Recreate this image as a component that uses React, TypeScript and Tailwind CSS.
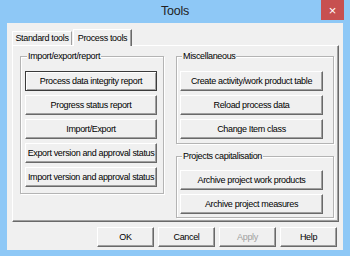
import React from "react";

const FONT = { fontFamily: '"Liberation Sans", Arial, sans-serif' };

function Btn({
  label,
  w,
  isDefault,
  disabled,
}: {
  label: string;
  w: string;
  isDefault?: boolean;
  disabled?: boolean;
}) {
  const edge = isDefault
    ? "border border-[#3a3a3a] shadow-[inset_1px_1px_0_#fff,inset_-1px_-1px_0_#a0a0a0]"
    : "border border-t-white border-l-white border-r-[#696969] border-b-[#696969] shadow-[inset_-1px_-1px_0_#a0a0a0]";
  return (
    <button
      type="button"
      className={`${w} h-[20px] shrink-0 bg-[#f0f0f0] flex items-center justify-center text-[9px] leading-none tracking-[-0.35px] ${edge} ${
        disabled ? "text-[#a0a0a0]" : "text-black"
      }`}
    >
      {label}
    </button>
  );
}

function Group({
  title,
  className,
  children,
}: {
  title: string;
  className: string;
  children: React.ReactNode;
}) {
  return (
    <fieldset
      className={`border border-[#b4b4b4] shadow-[inset_1px_1px_0_#fff,1px_1px_0_#fff] flex flex-col ${className}`}
    >
      <legend className="ml-[2px] px-[1px] bg-[#f0f0f0] text-[9px] leading-[11px] tracking-[-0.35px] text-black">
        {title}
      </legend>
      {children}
    </fieldset>
  );
}

export default function App() {
  return (
    <div className="w-[350px] h-[256px] bg-[#8ec8f6] flex flex-col overflow-hidden" style={FONT}>
      <div className="h-[23px] flex items-start shrink-0">
        <div className="w-[29px]" />
        <div className="flex-1 text-center text-[12.5px] leading-[23px] tracking-[-0.2px] text-[#222]">
          Tools
        </div>
        <div className="w-[23px] h-[20px] mr-[6px] bg-[#c75050] flex items-center justify-center text-white text-[13px] leading-none">
          ×
        </div>
      </div>

      <div className="mx-[7px] h-[227px] bg-[#f0f0f0] flex flex-col pt-[6px] pl-[5px]">
        {/* tabs */}
        <div className="flex items-end h-[16px] relative z-10">
          <div className="w-[60px] h-[14px] border border-b-0 border-t-white border-l-white border-r-[#a0a0a0] flex items-center justify-center text-[9px] tracking-[-0.35px] text-black">
            Standard tools
          </div>
          <div className="w-[59px] h-[17px] -mb-px ml-[1px] bg-[#f0f0f0] border border-b-0 border-t-white border-l-white border-r-[#696969] shadow-[inset_-1px_0_0_#a0a0a0] flex items-start pt-[2px] justify-center text-[9px] tracking-[-0.35px] text-black">
            Process tools
          </div>
        </div>

        {/* panel */}
        <div className="w-[327px] h-[177px] border border-t-white border-l-white border-r-[#696969] border-b-[#696969] shadow-[inset_-1px_-1px_0_#a0a0a0] flex items-start pl-[7px] pt-[5px]">
          <Group title="Import/export/report" className="w-[144px] h-[143px] pl-[4px] pt-[9px] gap-[4px]">
            <Btn label="Process data integrity report" w="w-[132px]" isDefault />
            <Btn label="Progress status report" w="w-[132px]" />
            <Btn label="Import/Export" w="w-[132px]" />
            <Btn label="Export version and approval status" w="w-[132px]" />
            <Btn label="Import version and approval status" w="w-[132px]" />
          </Group>

          <div className="ml-[12px] flex flex-col gap-[7px]">
            <Group title="Miscellaneous" className="w-[158px] h-[93px] pl-[3px] pt-[9px] gap-[4px]">
              <Btn label="Create activity/work product table" w="w-[143px]" />
              <Btn label="Reload process data" w="w-[143px]" />
              <Btn label="Change Item class" w="w-[143px]" />
            </Group>
            <Group title="Projects capitalisation" className="w-[158px] h-[67px] pl-[3px] pt-[8px] gap-[4px]">
              <Btn label="Archive project work products" w="w-[143px]" />
              <Btn label="Archive project measures" w="w-[143px]" />
            </Group>
          </div>
        </div>

        {/* dialog buttons */}
        <div className="flex justify-end gap-[4px] mt-[5px] pr-[6px]">
          <Btn label="OK" w="w-[57px]" />
          <Btn label="Cancel" w="w-[57px]" />
          <Btn label="Apply" w="w-[57px]" disabled />
          <Btn label="Help" w="w-[57px]" />
        </div>
      </div>
    </div>
  );
}
